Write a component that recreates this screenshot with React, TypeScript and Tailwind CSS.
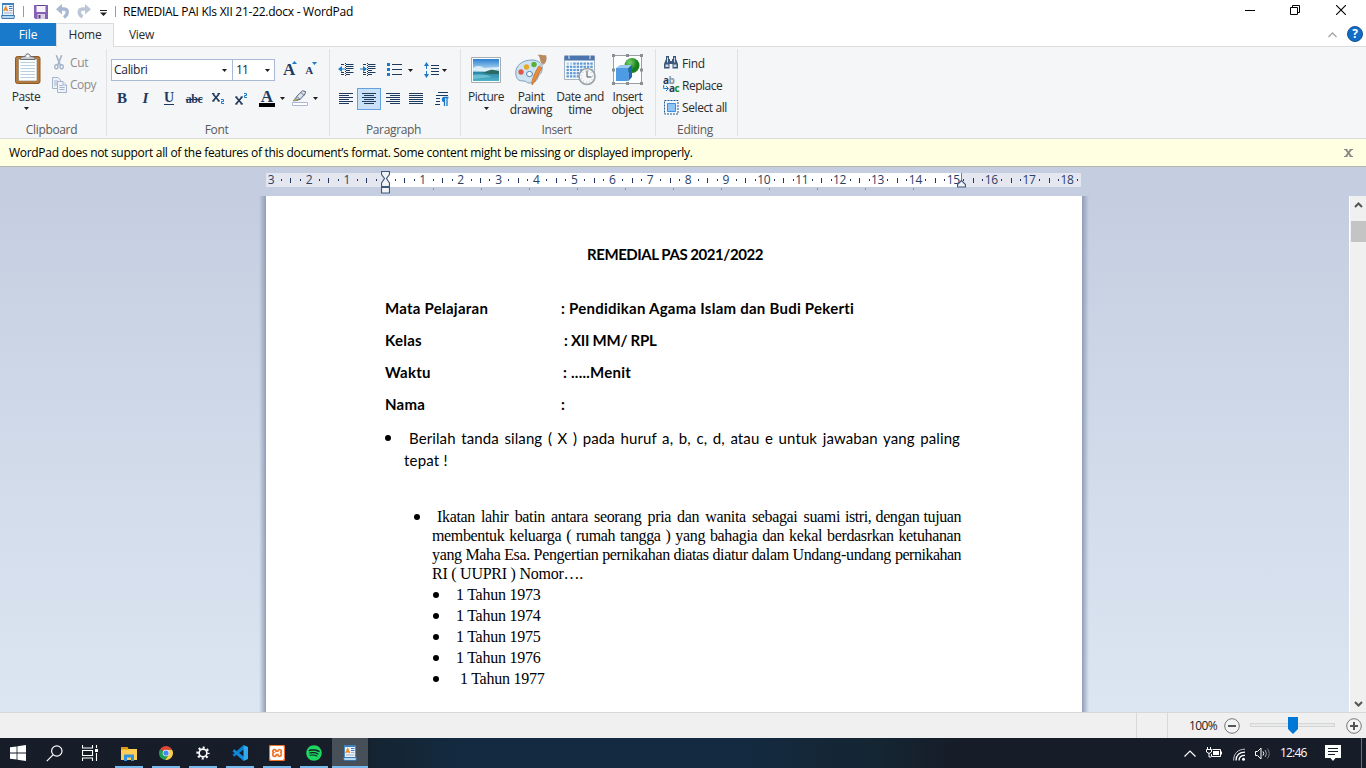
import React from 'react';
import { FaSpotify } from 'react-icons/fa';
import { SiXampp } from 'react-icons/si';

const UI = "font-['Open_Sans','Noto_Sans',sans-serif]";

function Caret({ className = '' }: { className?: string }) {
  return (
    <svg className={`shrink-0 ${className}`} width="5" height="3" viewBox="0 0 5 3">
      <path d="M0 0h5L2.500 3z" fill="#1e1e1e" />
    </svg>
  );
}

function WordPadIcon() {
  return (
    <svg width="14" height="16" viewBox="0 0 14 16" className="shrink-0">
      <path d="M1.500.500h11v12.500h-11z" fill="#eaf4fc" stroke="#4a8cc4" />
      <path d="M1 0h12v2H1z" fill="#3f80bb" />
      <path d="M.5 12.500h13L13 15.500H1z" fill="#b5d9f2" stroke="#2f6ea8" strokeWidth=".9" />
      <path d="M2.800 8 4.700 4 6.600 8M3.500 6.800h2.400" stroke="#ee8a2b" strokeWidth="1.500" fill="none" />
      <path d="M8 3.500h3.500M8 5.500h3.500" stroke="#4178c2" strokeWidth="1.200" />
      <path d="M8 7.500h3.500M3 10h8.500" stroke="#a2acc4" strokeWidth="1" />
    </svg>
  );
}

function TitleBar() {
  return (
    <header className="flex h-[23px] items-center bg-white">
      <div className="-mt-px ml-px flex w-[15px]"><WordPadIcon /></div>
      <div className="ml-[7px] h-[11px] w-px bg-[#9a9a9a]" />
      <svg className="ml-[10px] mt-px" width="14" height="14" viewBox="0 0 14 14">
        <path d="M0 0h14v14H1.500L0 12.500z" fill="#8661b5" />
        <path d="M2.500 0h9v7h-9z" fill="#f7f3fa" />
        <path d="M2.500 0h9v1h-9z" fill="#5d3f86" />
        <path d="M3.500 9h7.500v5h-7.500z" fill="#d9d0e4" />
        <path d="M4.500 10h2v3.500h-2z" fill="#5d3f86" />
      </svg>
      <svg className="ml-[8px]" width="14" height="15" viewBox="0 0 14 15">
        <path d="M3 5h4.500c5 0 5 5 .5 8.500" stroke="#a9b8d3" strokeWidth="3.400" fill="none" />
        <path d="M0 5.200 6 0v10.400z" fill="#a9b8d3" />
      </svg>
      <svg className="ml-[7px]" width="14" height="15" viewBox="0 0 14 15">
        <path d="M11 5H6.500C1 5 1 10 5.500 13" stroke="#bcc6d6" strokeWidth="3.400" fill="none" />
        <path d="M14 5.200 8 0v10.400z" fill="#bcc6d6" />
      </svg>
      <svg className="ml-[9px] mt-[3px]" width="7" height="6" viewBox="0 0 7 6">
        <path d="M0 0h7v1H0zM0 2.500h7L3.500 6z" fill="#222" />
      </svg>
      <div className="ml-[8px] h-[11px] w-px bg-[#9a9a9a]" />
      <span className="ml-[7px] whitespace-nowrap text-[12px] leading-[22px] tracking-[-0.26px] text-black">REMEDIAL PAI Kls XII 21-22.docx - WordPad</span>
      <svg className="ml-auto" width="10" height="11" viewBox="0 0 10 11"><path d="M0 4.500h10" stroke="#000" /></svg>
      <svg className="-mt-[3px] ml-[35px]" width="10" height="10" viewBox="0 0 10 10">
        <path d="M.5 2.500h7v7h-7zM2.500 2.500v-2h7v7h-2" stroke="#000" fill="none" />
      </svg>
      <svg className="-mt-[3px] ml-[36px] mr-[20px]" width="10" height="10" viewBox="0 0 10 10">
        <path d="M0 0 10 10M10 0 0 10" stroke="#000" strokeWidth="1.100" />
      </svg>
    </header>
  );
}

function Tabs() {
  return (
    <nav className="flex h-6 items-stretch bg-white text-[12px] leading-[24px]">
      <div className="h-[23px] w-14 bg-[#1979ca] text-center tracking-[-0.1px] text-white">File</div>
      <div className="w-[58px] border-x border-t border-[#dadbdc] bg-[#f5f6f7] text-center leading-[22px] tracking-[-0.25px] text-[#2b2b2b]">Home</div>
      <div className="flex flex-1 items-center border-b border-[#dadbdc]">
        <span className="ml-[15px] tracking-[-0.3px] text-[#2b2b2b]">View</span>
        <svg className="ml-auto" width="9" height="6" viewBox="0 0 9 6"><path d="m.5 5 4-4 4 4" stroke="#a5a5a5" strokeWidth="1.300" fill="none" /></svg>
        <div className="-mt-px ml-[10px] mr-[3px] flex h-4 w-4 items-center justify-center rounded-full border border-[#17528c] bg-[#0f6cc8] text-[12px] font-bold leading-none text-white">?</div>
      </div>
    </nav>
  );
}

function Group({ label, className, children }: { label: string; className: string; children: React.ReactNode }) {
  return (
    <section className={`mt-[2px] flex h-[87px] shrink-0 flex-col border-r border-[#e1e2e4] ${className}`}>
      <div className="h-[71px] shrink-0">{children}</div>
      <div className="-mb-1 shrink-0 pr-[3px] pt-px text-center text-[12px] leading-[18px] tracking-[-0.35px] text-[#5a5a5a]">{label}</div>
    </section>
  );
}

function PasteIcon() {
  return (
    <svg width="26" height="31" viewBox="0 0 26 31">
      <rect x=".5" y="3.500" width="24.500" height="27" rx="2" fill="#b5793a" stroke="#8f5a24" />
      <path d="M3.500 6h18.500v22H3.500z" fill="#fdfefe" stroke="#8d8374" strokeWidth=".7" />
      <path d="M5.500 9.500h14.500M5.500 12.500h14.500M5.500 15.500h14.500M5.500 18.500h14.500M5.500 21.500h14.500M5.500 24.500h14.500" stroke="#b9cfe0" />
      <path d="M5.500 6.500V5c1-1.300 3-1.300 4.500-1.500C10.500 0 15 0 15.500 3.500 17 3.700 19 3.700 20 5v1.500z" fill="#c7cbd0" stroke="#62676d" strokeWidth=".9" />
      <circle cx="12.800" cy="3" r="1.200" fill="#fff" />
    </svg>
  );
}

function Clipboard() {
  return (
    <Group label="Clipboard" className="w-[107px]">
      <div className="flex">
        <button className="flex w-[52px] flex-col items-center pt-[4px]">
          <span className="ml-[3px] block h-[31px]"><PasteIcon /></span>
          <span className="mt-[4px] text-[12px] leading-[18px] tracking-[-0.4px] text-[#2b2b2b]">Paste</span>
          <Caret className="mt-px" />
        </button>
        <div className="flex flex-col pt-[3px] text-[12px] leading-[22px] text-[#8d8d8d]">
          <div className="flex h-[22px] items-center">
            <svg className="-mt-px ml-[2px]" width="10" height="15" viewBox="0 0 11 16" fill="none" stroke="#a5b3cb">
              <path d="M2.500 0 7 11M8.500 0 4 11" strokeWidth="1.800" />
              <ellipse cx="2.600" cy="12.800" rx="1.800" ry="2.300" strokeWidth="1.500" /><ellipse cx="8.400" cy="12.800" rx="1.800" ry="2.300" strokeWidth="1.500" />
            </svg>
            <span className="ml-[6px] tracking-[-0.3px]">Cut</span>
          </div>
          <div className="flex h-[22px] items-center">
            <svg width="15" height="16" viewBox="0 0 15 16" fill="#eef2f9" stroke="#a5b3cb">
              <path d="M.5.500H6L8.500 3v8.500h-8z" /><path d="M2 4h4M2 6h4M2 8h4" />
              <path d="M5.500 4.500H11L14.500 8v7.500h-9z" /><path d="M11 4.500V8h3.500M7.500 8.500h3M7.500 10.500h5M7.500 12.500h5" />
            </svg>
            <span className="ml-[3px] tracking-[-0.5px]">Copy</span>
          </div>
        </div>
      </div>
    </Group>
  );
}

const SERIF = "font-['Liberation_Serif',serif] font-bold text-[#1e3a5f]";

function FontGroup() {
  return (
    <Group label="Font" className="w-[223px]">
      <div className="flex h-8 items-center pl-1 pt-[10px]">
        <div className="flex h-[22px] w-[122px] items-center border border-[#a9b8d4] bg-white pl-[2px] pr-[5px] text-[12px] tracking-[-0.3px] text-[#1b1b2f]">
          Calibri<Caret className="ml-auto" />
        </div>
        <div className="-ml-px flex h-[22px] w-[43px] items-center border border-[#a9b8d4] bg-white pl-[3px] pr-[4px] text-[12px] text-[#1b1b2f]">
          <span className="tracking-[-0.8px]">11</span><Caret className="ml-auto" />
        </div>
        <div className={`ml-2 flex items-start text-[17px] leading-[22px] ${SERIF}`}>A<svg className="-ml-[3px] mt-[2px]" width="5" height="3" viewBox="0 0 5 3"><path d="M0 3h5L2.500 0z" fill="#1979ca" /></svg></div>
        <div className={`ml-2 flex items-start text-[11px] leading-[26px] ${SERIF}`}>A<svg className="-ml-px mt-[5px]" width="5" height="3" viewBox="0 0 5 3"><path d="M0 0h5L2.500 3z" fill="#1979ca" /></svg></div>
      </div>
      <div className="mt-[6px] flex h-[22px] items-center pl-[3px]">
        <span className={`w-6 text-center text-[15px] ${SERIF}`}>B</span>
        <span className={`w-[23px] text-center text-[15px] italic ${SERIF}`}>I</span>
        <span className={`flex w-6 justify-center text-[14px] leading-[12px] ${SERIF}`}><span className="border-b border-[#1e3a5f]">U</span></span>
        <span className={`mt-[2px] w-[26px] text-center text-[12px] tracking-[-0.5px] line-through ${SERIF}`}>abc</span>
        <svg className="ml-[5px] mt-px" width="13" height="12" viewBox="0 0 13 12"><path d="m1 1 6 7M7 1 1 8" stroke="#1e3a5f" strokeWidth="1.700" /><path d="M0 .5h2.500M5.500.5H8M0 8h2.500M5.500 8H8" stroke="#1e3a5f" /><path d="M9 6.500h2.500v2H9.500v2H12" stroke="#1979ca" fill="none" /></svg>
        <svg className="ml-[10px]" width="13" height="13" viewBox="0 0 13 13"><path d="m1 5 6 7M7 5 1 12" stroke="#1e3a5f" strokeWidth="1.700" /><path d="M0 5h2.500M5.500 5H8M0 12h2.500M5.500 12H8" stroke="#1e3a5f" /><path d="M9 1.500h2.500v2H9.500v2H12" stroke="#1979ca" fill="none" /></svg>
        <span className={`ml-[11px] h-[17px] w-4 border-b-4 border-black text-center text-[17px] leading-[13px] ${SERIF}`}>A</span>
        <Caret className="ml-[5px]" />
        <svg className="ml-[7px]" width="16" height="16" viewBox="0 0 16 16">
          <path d="M3 10 4.500 6.500 10.500.8 13.500 1.500 13 4 8 9.500z" fill="#dfe5f0" stroke="#596579" />
          <path d="m5 6.500 3 3M9 2.500l3 3" stroke="#596579" /><path d="m1 11 2.500-3L6 10.500z" fill="#c9b53c" stroke="#596579" strokeWidth=".5" />
          <path d="M.5 12.500h15v3H.5z" fill="#fff" stroke="#a9b8d4" />
        </svg>
        <Caret className="ml-[5px]" />
      </div>
    </Group>
  );
}

function Lines({ d, className = '' }: { d: string; className?: string }) {
  return <svg className={className} width="14" height="12" viewBox="0 0 14 12"><path d={d} stroke="#1e3a5f" /></svg>;
}

function IndentIcon({ flip, className }: { flip: boolean; className: string }) {
  return (
    <svg className={className} width="16" height="14" viewBox="0 0 16 14">
      <path d="M8 1.500h7.500M8 3.500h7.500M8 5.500h7.500M8 7.500h4M8 9.500h7.500M3 1.500h3M3 9.500h3M3 11.500h3M8 11.500h4" stroke="#1e3a5f" />
      <path d="M7.500 0v14" stroke="#1e3a5f" strokeDasharray="1 1" />
      <path d={flip ? 'M0 5.500h3V3l4 3-4 3V6.500H0z' : 'M7 5.500H4V3L0 6l4 3V6.500h3z'} fill="#1979ca" />
    </svg>
  );
}

function Paragraph() {
  return (
    <Group label="Paragraph" className="w-[131px]">
      <div className="mt-[10px] flex h-[22px] items-center pl-2">
        <IndentIcon flip={false} className="" />
        <IndentIcon flip className="ml-[6px]" />
        <svg className="-mt-px ml-[11px]" width="15" height="13" viewBox="0 0 15 13">
          <path d="M0 0h3v3H0zM0 5h3v3H0zM0 10h3v3H0z" fill="#1979ca" /><path d="M5 1.500h10M5 6.500h10M5 11.500h10" stroke="#1e3a5f" />
        </svg>
        <Caret className="ml-[6px]" />
        <svg className="ml-[11px]" width="15" height="16" viewBox="0 0 15 16">
          <path d="M2.500 2v12" stroke="#1979ca" strokeDasharray="5 2" /><path d="M0 4h5L2.500 0zM0 12h5l-2.500 4z" fill="#1979ca" />
          <path d="M7 3.500h8M7 6.500h8M7 9.500h8M7 12.500h8" stroke="#1e3a5f" />
        </svg>
        <Caret className="ml-[3px]" />
      </div>
      <div className="mt-[7px] flex h-[22px] items-center pl-[9px]">
        <Lines d="M0 .5h14M0 2.500h10M0 4.500h14M0 6.500h10M0 8.500h14M0 10.500h10" />
        <div className="ml-1 flex h-[22px] w-6 items-center justify-center border border-[#62a2e4] bg-[#c9e0f7]">
          <Lines d="M0 .5h14M2 2.500h10M0 4.500h14M2 6.500h10M0 8.500h14M2 10.500h10" />
        </div>
        <Lines className="ml-[5px]" d="M0 .5h14M4 2.500h10M0 4.500h14M4 6.500h10M0 8.500h14M4 10.500h10" />
        <Lines className="ml-[9px]" d="M0 .5h14M0 2.500h14M0 4.500h14M0 6.500h14M0 8.500h14M0 10.500h14" />
        <svg className="ml-[12px]" width="14" height="14" viewBox="0 0 14 14">
          <path d="M3 .5h10M1 3.500h12M1 6.500h4M1 9.500h4M0 12.500h5" stroke="#1e3a5f" />
          <path d="M13.500 5.500H9.500a1.500 1.500 0 0 0 0 4M9.500 5.500V14M12 5.500V14" stroke="#1979ca" strokeWidth="1.300" fill="none" />
          <path d="M7 7.500a2 2 0 0 1 2.500-2v4A2 2 0 0 1 7 7.500" fill="#1979ca" />
        </svg>
      </div>
    </Group>
  );
}

function PictureIcon() {
  return (
    <svg width="32" height="32" viewBox="0 0 32 32">
      <defs><linearGradient id="sky" x2="0" y2="1"><stop stopColor="#2a7fd2" /><stop offset=".55" stopColor="#c4e6f5" /><stop offset=".6" stopColor="#2c86a8" /><stop offset="1" stopColor="#4fb3c9" /></linearGradient></defs>
      <path d="M1.500 3.500h29v25h-29z" fill="#fff" stroke="#a9adb1" /><path d="M3 5h26v22H3z" fill="url(#sky)" />
      <path d="M3 14c5-3 8-2 11 0l15-1v2c-8 3-15 3-26 1z" fill="#e8f5fb" opacity=".8" />
      <path d="M12 19c5-1 7-4 12-3l5 1v3c-6 0-11 0-17-1" fill="#2a6b62" /><path d="M3 21c7-1 16 0 18 2l-18 2z" fill="#7dd0dd" opacity=".7" />
    </svg>
  );
}

function PaintIcon() {
  return (
    <svg width="32" height="32" viewBox="0 0 32 32">
      <path d="M.8 20C0 11 8 6 17 6c7 0 11 4 10 10-1 5-3 4-4 7-1 4-4 6-9 6-2 0-3-2-5-2C3 27 1.500 25 .8 20z" fill="#cfe4f3" stroke="#7d9fbc" />
      <ellipse cx="14.500" cy="20" rx="3" ry="2.600" fill="#f5f6f7" stroke="#4f86b4" />
      <circle cx="6" cy="18" r="2.700" fill="#dc5a48" /><circle cx="11.500" cy="13" r="2.700" fill="#e3a92e" /><circle cx="19" cy="10.500" r="2.700" fill="#58b13c" />
      <path d="M17 31c-1-5 4-15 7-19l3 1.500C24 19 21 27 17 31z" fill="#ec8b35" stroke="#b75d1b" strokeWidth=".6" />
      <path d="m24 12 2-4 3 1.500-2 4z" fill="#bfc5ca" /><path d="M26 8.500C24.500 5 25 2 22.500 1c4-1 6 1 8.500 0 1 3 1 6-2 9.500z" fill="#b88b61" />
    </svg>
  );
}

function DateIcon() {
  const cells: React.ReactNode[] = [];
  for (let r = 0; r < 5; r++) for (let c = 0; c < 8; c++) cells.push(<rect key={`${r}-${c}`} x={2.500 + c * 3.400} y={8.500 + r * 3.200} width="2.400" height="2.200" fill={r === 0 && c < 2 ? '#b9d3ea' : '#5e97d2'} />);
  return (
    <svg width="32" height="32" viewBox="0 0 32 32">
      <path d="M.5 2.500h30v23H.5z" fill="#f7fafc" stroke="#a4b1bf" /><path d="M.5 1.500h30v5H.5z" fill="#4c74ad" />
      <path d="M5 1v4M26 1v4" stroke="#dfe9f4" />{cells}
      <circle cx="23" cy="22.500" r="8" fill="#f4f6f7" stroke="#9da2a7" strokeWidth="1.600" /><path d="M23 16.500v6.500h4.500" stroke="#4b5661" fill="none" /><circle cx="23" cy="22.500" r="5.800" fill="none" stroke="#9ca5ad" strokeDasharray=".6 2.500" />
    </svg>
  );
}

function ObjectIcon() {
  return (
    <svg width="32" height="32" viewBox="1 0 32 32">
      <defs><radialGradient id="ball" cx=".35" cy=".3"><stop stopColor="#7ad36c" /><stop offset="1" stopColor="#16801d" /></radialGradient></defs>
      <path d="M2.500 1.500h28v28h-28z" fill="#fcfdfd" stroke="#9a9fa4" />
      <path d="M1 0h3v3H1zM15 0h3v3h-3zM29 0h3v3h-3zM1 14.500h3v3H1zM29 14.500h3v3h-3zM1 28h3v3H1zM15 28h3v3h-3zM29 28h3v3h-3z" fill="#8a8f95" />
      <circle cx="21" cy="11.500" r="7.500" fill="url(#ball)" />
      <path d="m5 14 4-3h12l-3.500 3z" fill="#9bc8f1" /><path d="M5 14h12.500v13H5z" fill="#4d9be5" /><path d="m17.500 14 3.500-3v12l-3.500 4z" fill="#1f66b8" />
    </svg>
  );
}

function BigButton({ icon, lines, caret, className }: { icon: React.ReactNode; lines: string[]; caret?: boolean; className: string }) {
  return (
    <button className={`flex flex-col items-center pt-[5px] text-[12px] leading-[13px] text-[#2b2b2b] ${className}`}>
      <span className="mb-[4px] block h-8">{icon}</span>
      {lines.map((l) => <span key={l} className="whitespace-nowrap">{l}</span>)}
      {caret && <Caret className="mt-[4px]" />}
    </button>
  );
}

function Insert() {
  return (
    <Group label="Insert" className="w-[195px]">
      <div className="flex">
        <BigButton className="ml-[2px] w-[46px] tracking-[-0.5px]" icon={<PictureIcon />} lines={['Picture']} caret />
        <BigButton className="w-[44px] tracking-[-0.4px]" icon={<PaintIcon />} lines={['Paint', 'drawing']} />
        <BigButton className="w-[54px] tracking-[-0.4px]" icon={<DateIcon />} lines={['Date and', 'time']} />
        <BigButton className="w-[41px] tracking-[-0.4px]" icon={<ObjectIcon />} lines={['Insert', 'object']} />
      </div>
    </Group>
  );
}

function Editing() {
  return (
    <Group label="Editing" className="w-[82px]">
      <div className="flex flex-col pl-[7px] pt-[3px] text-[12px] leading-[21px] text-[#2b2b2b]">
        <div className="flex h-[22px] items-center">
          <svg width="16" height="14" viewBox="0 0 16 14"><path d="M3 0h3v3h1v2h2V3h1V0h3v3l2 5v4.500h-5.500V8h-3v4.500H1V8l2-5z" fill="#3a5678" /><path d="M2.500 8.500h3V11h-3zM10.500 8.500h3V11h-3zM4 1.500h1v5H4zM11 1.500h1v5h-1z" fill="#c8d6e6" /></svg>
          <span className="ml-[3px] tracking-[-0.25px]">Find</span>
        </div>
        <div className="flex h-[22px] items-center">
          <div className="flex h-[18px] w-4 flex-col text-[10px] font-bold leading-[8px] tracking-[-0.5px] text-[#1e3a5f]">
            <div>a<span className="text-[#8d97a5]">b</span></div>
            <div className="flex items-start">
              <svg className="mt-[1px] shrink-0" width="6" height="6" viewBox="0 0 6 6"><path d="M.7 0v3.500H5M3 1l2.500 2.500L3 6" stroke="#1979ca" fill="none" /></svg>
              a<span className="text-[#178a24]">c</span>
            </div>
          </div>
          <span className="ml-[3px] tracking-[-0.5px]">Replace</span>
        </div>
        <div className="flex h-[22px] items-center">
          <svg className="ml-px" width="15" height="15" viewBox="0 0 15 15"><path d="M.5.500h13.500v13.500H.5z" fill="none" stroke="#1e5a91" strokeDasharray="2 1" /><path d="M3.500 3.500h8v8h-8z" fill="#8fc4f5" stroke="#3c8fe0" /></svg>
          <span className="ml-[3px] whitespace-nowrap tracking-[-0.4px]">Select all</span>
        </div>
      </div>
    </Group>
  );
}

const cms = [3, 2, 1, 0, 1, 2, 3, 4, 5, 6, 7, 8, 9, 10, 11, 12, 13, 14, 15, 16, 17, 18];

function Ruler() {
  return (
    <div className="relative flex h-[29px] flex-col bg-[#c5cee0] pl-[266px] pt-[6px]">
      <div className="flex h-[14px] w-[815px] bg-[linear-gradient(90deg,#e4e7ef_119px,#fff_119px,#fff_695px,#e4e7ef_695px)] pl-[5px]">
        {cms.map((n, i) => (
          <div key={i} className="grid w-[37.92px] shrink-0 grid-cols-4 items-center">
            <span className="-ml-[10px] w-5 text-center text-[12px] leading-[14px] tracking-[-0.3px] text-[#2b3f66]">{n === 0 ? '' : n}</span>
            <span className="ml-[0.5px] h-[2px] w-px bg-[#1f355e]" />
            {n < 18 && <span className="ml-[0.5px] h-[5px] w-px bg-[#1f355e]" />}
            {n < 18 && <span className="ml-[0.5px] h-[2px] w-px bg-[#1f355e]" />}
          </div>
        ))}
      </div>
      <div className="mt-px flex gap-[47px] pl-[167px]">
        {Array.from({ length: 11 }, (_, i) => <span key={i} className="h-[2px] w-px bg-[#8793a9]" />)}
      </div>
      <svg className="absolute left-[381px] top-[4px]" width="9" height="23" viewBox="0 0 9 23">
        <path d="M.5.500h8v3L5.500 7.500 8.500 12v3.500H.5V12L3.500 7.500.5 3.500zM.5 16.500h8v5.500h-8z" fill="#f1f3f7" stroke="#3f587f" strokeWidth="1.200" />
      </svg>
      <svg className="absolute left-[957px] top-[6px]" width="9" height="15" viewBox="0 0 9 15">
        <path d="M4.500 0v8" stroke="#6d7f9c" /><path d="M4.500 7.500.5 11.500v2.500h8v-2.500z" fill="#f1f3f7" stroke="#3f587f" strokeWidth="1.200" />
      </svg>
    </div>
  );
}

const fields = [
  { name: 'Mata Pelajaran', value: ': Pendidikan Agama Islam dan Budi Pekerti', style: 'tracking-[0.25px]' },
  { name: 'Kelas', value: ': XII MM/ RPL', style: 'pl-[3px] tracking-[-0.25px]' },
  { name: 'Waktu', value: ': .....Menit', style: 'pl-[2px] tracking-[0.25px]' },
  { name: 'Nama', value: ':', style: '' },
];

const JUST = 'whitespace-nowrap [text-align-last:justify]';

function Dot() {
  return <span className="h-[6px] w-[6px] shrink-0 rounded-full bg-black" />;
}

function Page() {
  return (
    <article className="h-[516px] w-[816px] shrink-0 overflow-hidden bg-white pl-[119px] pt-[47px] text-black">
      <div className="font-['Lato',sans-serif] text-[15px]">
        <h1 className="w-[580px] text-center font-bold leading-[22px] tracking-[-0.45px]">REMEDIAL PAS 2021/2022</h1>
        <div className="mt-[27px] font-bold leading-8">
          {fields.map((f) => (
            <div key={f.name} className="flex h-8">
              <span className="w-[176px] tracking-[0.25px]">{f.name}</span><span className={f.style}>{f.value}</span>
            </div>
          ))}
        </div>
        <div className="mt-[7px] flex h-[22px] items-center leading-[22px]">
          <Dot /><span className={`ml-[18px] w-[551px] tracking-[0.1px] ${JUST}`}>Berilah tanda silang ( X ) pada huruf a, b, c, d, atau e untuk jawaban yang paling</span>
        </div>
        <div className="pl-[19px] leading-[22px] tracking-[0.2px]">tepat !</div>
      </div>
      <div className="mt-[36px] font-['Liberation_Serif',serif] text-[16px] tracking-[-0.35px]">
        <div className="flex h-[19px] items-center pl-[29px] leading-[19px]">
          <Dot /><span className={`ml-[17px] w-[403px] ${JUST}`}>Ikatan lahir batin antara seorang pria dan wanita sebagai suami</span>
          <span className={`ml-[5px] w-[116px] tracking-[-0.42px] ${JUST}`}>istri, dengan tujuan</span>
        </div>
        <div className="flex h-[19px] pl-[47px] leading-[19px]">
          <span className={`w-[390px] ${JUST}`}>membentuk keluarga ( rumah tangga ) yang bahagia dan kekal</span>
          <span className={`ml-[5px] w-[134px] ${JUST}`}>berdasrkan ketuhanan</span>
        </div>
        <div className="flex h-[19px] pl-[47px] leading-[19px]">
          <span className={`w-[459px] ${JUST}`}>yang Maha Esa. Pengertian pernikahan diatas diatur dalam Undang-undang</span>
          <span className="ml-[4px] tracking-[-0.5px]">pernikahan</span>
        </div>
        <div className="h-[19px] pl-[47px] leading-[19px] tracking-[-0.25px]">RI ( UUPRI ) Nomor….</div>
        <ul className="mt-px pl-[48px] leading-[21px] tracking-[-0.25px]">
          {['1973', '1974', '1975', '1976', '1977'].map((y) => (
            <li key={y} className="flex h-[21px] items-center"><Dot /><span className={y === '1977' ? 'ml-[21px]' : 'ml-[17px]'}>1 Tahun {y}</span></li>
          ))}
        </ul>
      </div>
    </article>
  );
}

function Workspace() {
  return (
    <main className="flex h-[516px] bg-[linear-gradient(#c5cee0,#dce6f2)]">
      <div className="w-[259px]" />
      <div className="w-[7px] bg-[linear-gradient(90deg,transparent,#8f9db8)]" />
      <Page />
      <div className="w-[7px] bg-[linear-gradient(270deg,transparent,#8f9db8)]" />
      <div className="flex-1" />
      <aside className="flex w-[17px] flex-col items-center border-l border-white bg-[#f0f0f0]">
        <svg className="mt-[6px]" width="9" height="6" viewBox="0 0 9 6"><path d="m1 5 3.500-3.500L8 5" stroke="#555" strokeWidth="2" fill="none" /></svg>
        <div className="mt-[13px] h-[21px] w-[15px] bg-[#c4c4c4]" />
        <svg className="mb-[5px] mt-auto" width="9" height="6" viewBox="0 0 9 6"><path d="m1 1 3.500 3.500L8 1" stroke="#555" strokeWidth="2" fill="none" /></svg>
      </aside>
    </main>
  );
}

function ZoomButton({ plus }: { plus: boolean }) {
  return (
    <svg width="16" height="16" viewBox="0 0 16 16">
      <circle cx="8" cy="8" r="7.300" fill="#f4f4f4" stroke="#777" /><path d={plus ? 'M4 8h8M8 4v8' : 'M4 8h8'} stroke="#555" strokeWidth="2" />
    </svg>
  );
}

function StatusBar() {
  return (
    <footer className="flex h-[26px] items-center border-t border-[#d7d7d7] bg-[#f0f0f0]">
      <div className="ml-[1136px] h-full w-px bg-[#d9d9d9]" />
      <div className="ml-[30px] h-full w-px bg-[#d9d9d9]" />
      <span className="ml-[21px] w-[28px] text-[12px] leading-[24px] tracking-[-0.6px] text-[#222]">100%</span>
      <div className="ml-[7px]"><ZoomButton plus={false} /></div>
      <div className="relative -mt-px ml-[10px] h-1 w-[85px] border border-[#d6d6d6] bg-[#e7eaea]">
        <svg className="absolute -top-[7px] left-[37px]" width="10" height="17" viewBox="0 0 10 17"><path d="M0 0h10v12l-5 5-5-5z" fill="#0078d7" /></svg>
      </div>
      <div className="ml-[11px]"><ZoomButton plus /></div>
    </footer>
  );
}

function TaskItem({ children, state = 'idle' }: { children: React.ReactNode; state?: 'idle' | 'open' | 'active' }) {
  return (
    <div className={`flex shrink-0 flex-col items-center ${state === 'active' ? 'w-9 bg-[#475059]' : state === 'idle' ? 'w-9' : 'w-[37px]'}`}>
      <div className="flex h-7 items-center justify-center pt-[2px]">{children}</div>
      {state !== 'idle' && <div className={`h-[2px] bg-[#76b9ed] ${state === 'active' ? 'w-9' : 'w-7'}`} />}
    </div>
  );
}

function Taskbar() {
  return (
    <div className="flex h-[30px] bg-[linear-gradient(90deg,#161c28_0,#171d29_366px,#152431_372px,#132a40_460px,#132a40_740px,#152532_880px,#161c28_960px)] text-white">
      <TaskItem><svg width="16" height="16" viewBox="0 0 16 16"><path d="M0 2.300 6.600 1.400v6.200H0zM7.400 1.200 16 0v7.600H7.400zM0 8.400h6.600v6.200L0 13.700zM7.400 8.400H16V16l-8.600-1.200z" fill="#fff" /></svg></TaskItem>
      <TaskItem><svg width="17" height="17" viewBox="0 0 17 17" fill="none" stroke="#fff" strokeWidth="1.200"><circle cx="10.800" cy="6" r="5.200" /><path d="M7 9.800.8 16.200" /></svg></TaskItem>
      <div className="w-[38px] shrink-0"><TaskItem><svg width="16" height="16" viewBox="0 0 16 16" fill="none" stroke="#fff" strokeWidth="1.100"><path d="M.5 0v3h10V0M.5 5.500h10v5H.5zM.5 16v-3h10v3M14.500 0v3M14.500 8v8" /><path d="M13 4h3v3h-3z" fill="#fff" stroke="none" /></svg></TaskItem></div>
      <TaskItem state="open"><svg width="16" height="15" viewBox="0 0 16 15"><path d="M0 1h6l1 2h9v11H0z" fill="#ffce54" /><path d="M0 1h6.500L8 3.500H0z" fill="#d99b15" /><path d="M3 8.500h10V15h-3v-3.500H6V15H3z" fill="#2f92dd" /></svg></TaskItem>
      <TaskItem state="open"><svg width="14" height="14" viewBox="0 0 14 14"><path d="M7 7 1 3.400A7 7 0 0 1 13.100 3.700H7z" fill="#df4437" /><path d="M7 7 1 3.400A7 7 0 0 0 6.300 14L9.800 8.600z" fill="#1e9f57" /><path d="M7 3.700h6.100A7 7 0 0 1 6.300 14L9.800 8.600z" fill="#fdcf47" /><circle cx="7" cy="7" r="3.300" fill="#f1f1f1" /><circle cx="7" cy="7" r="2.600" fill="#4486f4" /></svg></TaskItem>
      <TaskItem state="open"><svg width="14" height="14" viewBox="0 0 14 14" fill="none" stroke="#fff"><circle cx="7" cy="7" r="3.900" strokeWidth="1.700" /><circle cx="7" cy="7" r="5.500" strokeWidth="2.200" strokeDasharray="2 2.320" strokeDashoffset="1" /></svg></TaskItem>
      <TaskItem state="open"><svg width="16" height="16" viewBox="0 0 16 16"><path d="M11.500 0 .5 9.800 2.200 11.700 12 4.200z" fill="#0a7fcf" /><path d="M.5 6.200 2.200 4.300 12 11.800 11.500 16z" fill="#1288d8" /><path d="M11.500 0 16 2v12l-4.500 2z" fill="#30a9ef" /></svg></TaskItem>
      <TaskItem state="open"><div className="flex h-4 w-4 items-center justify-center rounded-[1px] bg-[#ef7226] text-[14px]"><SiXampp /></div></TaskItem>
      <TaskItem state="open"><FaSpotify size={16} color="#1ed760" /></TaskItem>
      <TaskItem state="active"><WordPadIcon /></TaskItem>
      <div className="ml-auto flex items-center">
        <svg width="12" height="7" viewBox="0 0 12 7"><path d="m.5 6.500 5.500-5.500 5.500 5.500" stroke="#fff" strokeWidth="1.200" fill="none" /></svg>
        <svg className="ml-[10px]" width="16" height="12" viewBox="0 0 16 12" fill="none" stroke="#fff"><path d="M1.500 0v2M4.500 0v2M.5 2.500h5V5L3 6.500.5 5zM3 6v4h2" /><path d="M6.500 2.500h8v7h-9V7" /><path d="M7 4h6v4H7zM15 4.500h1v3h-1z" fill="#fff" stroke="none" /></svg>
        <svg className="ml-[11px] mt-[3px]" width="12" height="13" viewBox="0 0 12 13" fill="none" stroke="#fff"><path d="M3 12.500C3 7 6.500 4.200 12 4.200M6 12.500c0-3.500 2.500-5.200 6-5.200" strokeWidth="1.300" /><path d="M.6 12.500C.6 5.500 5 1.200 12 1.200" stroke="#c5c8cc" /><circle cx="10.500" cy="11.200" r="1.500" fill="#fff" stroke="none" /></svg>
        <svg className="ml-[10px]" width="16" height="13" viewBox="0 0 16 13" fill="none" stroke="#fff"><path d="M.5 4.500h2L6 1v11L2.500 8.500h-2z" /><path d="M8 4.500q1.500 2 0 4" /><path d="M10.200 3q2.500 3.500 0 7" stroke="#aaa" /><path d="M12.500 1.500q3.500 5 0 10" stroke="#777" /></svg>
        <span className="ml-[9px] w-[27px] whitespace-nowrap text-[12px] leading-[28px] tracking-[-0.8px]">12:46</span>
        <svg className="ml-[18px]" width="16" height="16" viewBox="0 0 16 16"><path d="M0 0h16v13h-5.500L8 16l-2.500-3H0z" fill="#fff" /><path d="M3 3.500h10M3 6.500h10M3 9.500h7" stroke="#161c28" /></svg>
        <div className="ml-[20px] mr-1 h-[30px] w-px bg-[#6b7078]" />
      </div>
    </div>
  );
}

export default function App() {
  return (
    <div className={`flex h-[768px] w-[1366px] flex-col overflow-hidden bg-white ${UI}`}>
      <TitleBar />
      <Tabs />
      <div className="flex h-[92px] border-b border-[#dadbdc] bg-[#f5f6f7]">
        <Clipboard /><FontGroup /><Paragraph /><Insert /><Editing />
      </div>
      <div className="flex h-7 items-center border-b border-[#b5b5ae] bg-[#ffffe1] text-[12px] text-black">
        <span className="ml-[9px] mt-px tracking-[-0.3px]">WordPad does not support all of the features of this document’s format. Some content might be missing or displayed improperly.</span>
        <svg className="ml-auto mr-[13px]" width="9" height="8" viewBox="0 0 9 8"><path d="m1.500 0 6 8M7.500 0l-6 8" stroke="#858585" strokeWidth="1.800" /><path d="M0 .5h3.500M5.500.5H9M0 7.500h3.500M5.500 7.500H9" stroke="#858585" /></svg>
      </div>
      <Ruler />
      <Workspace />
      <StatusBar />
      <Taskbar />
    </div>
  );
}
